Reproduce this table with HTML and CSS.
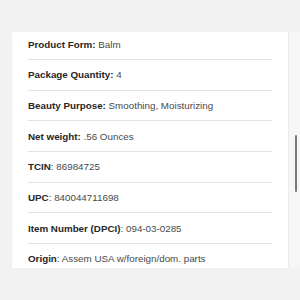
FILE: index.html
```html
<!DOCTYPE html>
<html lang="en">
<head>
  <meta charset="UTF-8">
  <meta name="viewport" content="width=device-width, initial-scale=1.0">
  <title>Specifications</title>
  <link rel="stylesheet" href="styles.css">
</head>
<body>
  <div class="spec-frame">
    <div class="spec-panel">
      <ul class="spec-list">
        <li class="spec-row"><b>Product Form:</b> Balm</li>
        <li class="spec-row"><b>Package Quantity:</b> 4</li>
        <li class="spec-row"><b>Beauty Purpose:</b> Smoothing, Moisturizing</li>
        <li class="spec-row"><b>Net weight:</b> .56 Ounces</li>
        <li class="spec-row"><b>TCIN</b>: 86984725</li>
        <li class="spec-row"><b>UPC</b>: 840044711698</li>
        <li class="spec-row"><b>Item Number (DPCI)</b>: 094-03-0285</li>
        <li class="spec-row"><b>Origin</b>: Assem USA w/foreign/dom. parts</li>
      </ul>
    </div>
    <div class="scroll-track">
      <div class="scroll-thumb"></div>
    </div>
  </div>
</body>
</html>
```

FILE: styles.css
```css
/* Page */
body {
  margin: 0;
  background: #f2f2f2;
  font-family: 'Liberation Sans', Arial, sans-serif;
  width: 300px;
  height: 300px;
  overflow: hidden;
}

.spec-frame {
  display: flex;
  margin: 32px 0 0 12px;
  height: 236px;
}

/* Card that scrolls */
.spec-panel {
  background: #fff;
  width: 276px;
  height: 100%;
  overflow: hidden;
  box-shadow: 0 0 2px rgba(0, 0, 0, 0.04);
}

.spec-list {
  list-style: none;
  margin: -2.67px 16px 0 16px;
  padding: 0;
}

.spec-row {
  height: 29.67px;
  display: flex;
  align-items: center;
  white-space: pre;
  font-size: 9.8px;
  color: #4a4a4a;
  border-bottom: 1px solid #e2e2e2;
}

.spec-row b {
  color: #262626;
  font-weight: 700;
}

/* Scrollbar */
.scroll-track {
  width: 12px;
  height: 100%;
  background: #f6f6f6;
  border-left: 1px solid #ececec;
  box-sizing: border-box;
  position: relative;
}

.scroll-thumb {
  position: absolute;
  left: 6px;
  top: 103px;
  width: 2px;
  height: 57px;
  border-radius: 1px;
  background: #7a7a7a;
}
```
